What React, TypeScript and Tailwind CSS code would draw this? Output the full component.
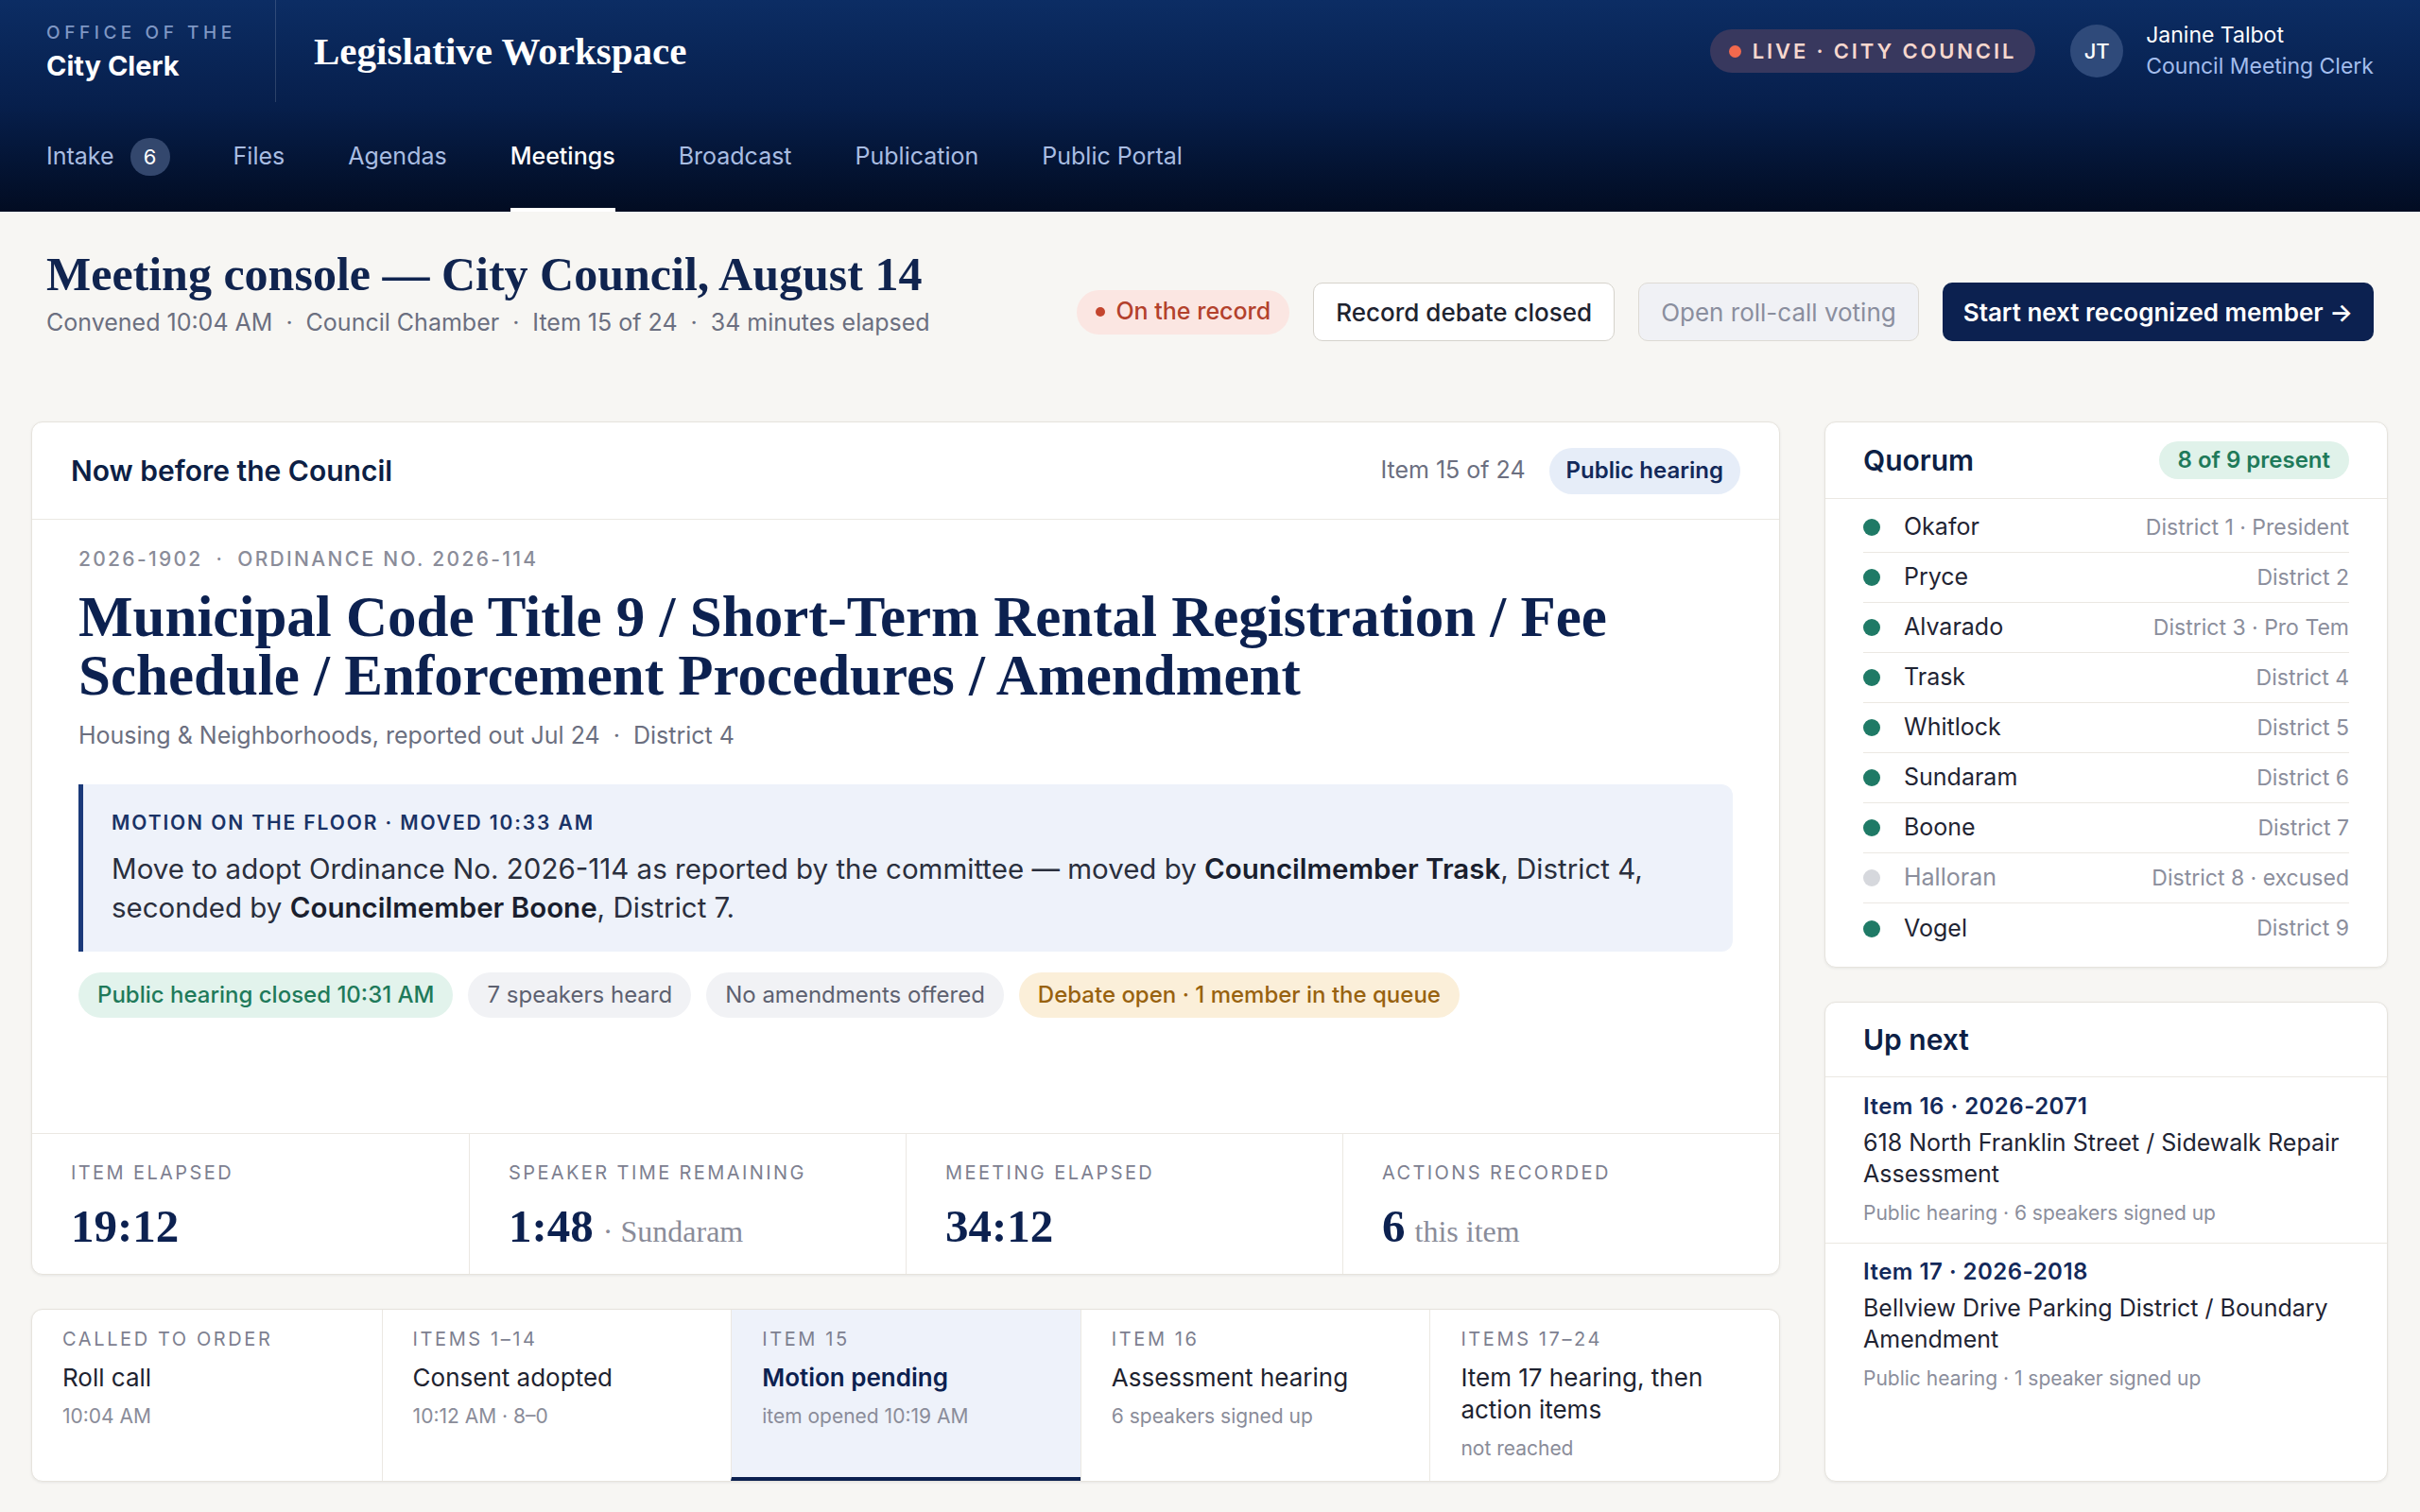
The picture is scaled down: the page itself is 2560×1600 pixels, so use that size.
import React from "react";

const navItems = [
  { label: "Intake", badge: "6" },
  { label: "Files" },
  { label: "Agendas" },
  { label: "Meetings", active: true },
  { label: "Broadcast" },
  { label: "Publication" },
  { label: "Public Portal" },
];

const members = [
  { name: "Okafor", district: "District 1 · President", present: true },
  { name: "Pryce", district: "District 2", present: true },
  { name: "Alvarado", district: "District 3 · Pro Tem", present: true },
  { name: "Trask", district: "District 4", present: true },
  { name: "Whitlock", district: "District 5", present: true },
  { name: "Sundaram", district: "District 6", present: true },
  { name: "Boone", district: "District 7", present: true },
  { name: "Halloran", district: "District 8 · excused", present: false },
  { name: "Vogel", district: "District 9", present: true },
];

const stats = [
  { label: "Item elapsed", value: "19:12" },
  { label: "Speaker time remaining", value: "1:48", note: "· Sundaram" },
  { label: "Meeting elapsed", value: "34:12" },
  { label: "Actions recorded", value: "6", note: "this item" },
];

const timeline = [
  { label: "Called to order", title: "Roll call", sub: "10:04 AM" },
  { label: "Items 1–14", title: "Consent adopted", sub: "10:12 AM · 8–0" },
  { label: "Item 15", title: "Motion pending", sub: "item opened 10:19 AM", active: true },
  { label: "Item 16", title: "Assessment hearing", sub: "6 speakers signed up" },
  { label: "Items 17–24", title: "Item 17 hearing, then action items", sub: "not reached" },
];

const upNext = [
  {
    label: "Item 16 · 2026-2071",
    title: "618 North Franklin Street / Sidewalk Repair Assessment",
    sub: "Public hearing · 6 speakers signed up",
  },
  {
    label: "Item 17 · 2026-2018",
    title: "Bellview Drive Parking District / Boundary Amendment",
    sub: "Public hearing · 1 speaker signed up",
  },
];

const serif = "font-['Liberation_Serif','DejaVu_Serif',serif]";

export default function App() {
  return (
    <div className="min-h-screen bg-[#f7f6f3] font-['Inter','Noto_Sans',sans-serif] text-[#1f2433]">
      {/* Top bar */}
      <header className="bg-linear-to-b from-[#0c2d64] via-[#071f4c] to-[#020c22] px-[49px]">
        <div className="flex h-[108px] items-center">
          <div className="w-[242px]">
            <div className="text-[19px] font-medium uppercase leading-none tracking-[0.24em] text-[#7f97c4]">
              Office of the
            </div>
            <div className="mt-[11px] text-[29px] font-bold leading-none text-white">City Clerk</div>
          </div>
          <div className="h-full w-px bg-white/15" />
          <div className={`${serif} ml-[40px] text-[41px] font-bold leading-none text-white`}>
            Legislative Workspace
          </div>
          <div className="ml-auto flex items-center">
            <div className="flex h-[46px] items-center gap-[12px] rounded-full bg-[#38385e] px-[20px]">
              <span className="h-[13px] w-[13px] rounded-full bg-[#f2694d]" />
              <span className="text-[22px] font-semibold uppercase tracking-[0.13em] text-[#f6d7ce]">
                Live · City Council
              </span>
            </div>
            <div className="ml-[37px] flex h-[56px] w-[56px] items-center justify-center rounded-full bg-[#2f4a7a] text-[22px] font-medium text-white">
              JT
            </div>
            <div className="ml-[24px] leading-tight">
              <div className="text-[23px] text-white">Janine Talbot</div>
              <div className="mt-[4px] text-[23px] text-[#a3bdec]">Council Meeting Clerk</div>
            </div>
          </div>
        </div>
        <nav className="flex h-[116px] items-stretch gap-[67px]">
          {navItems.map((n) => (
            <div
              key={n.label}
              className={
                n.active
                  ? "flex items-center border-b-4 border-white pt-[4px] text-[25px] font-medium text-white"
                  : "flex items-center border-b-4 border-transparent pt-[4px] text-[25px] text-[#a9bde2]"
              }
            >
              {n.label}
              {n.badge && (
                <span className="ml-[17px] flex h-[40px] w-[42px] items-center justify-center rounded-full bg-[#33476d] text-[22px] text-white">
                  {n.badge}
                </span>
              )}
            </div>
          ))}
        </nav>
      </header>

      <main className="px-[33px]">
        {/* Page title + actions */}
        <div className="flex items-start justify-between px-[16px] pt-[40px]">
          <div>
            <h1 className={`${serif} text-[50px] font-bold leading-[53px] text-[#10244f]`}>
              Meeting console — City Council, August 14
            </h1>
            <div className="mt-[8px] flex items-center text-[25px] leading-[32px] text-[#6b6f80]">
              <span>Convened 10:04 AM</span>
              <span className="mx-[14px]">·</span>
              <span>Council Chamber</span>
              <span className="mx-[14px]">·</span>
              <span>Item 15 of 24</span>
              <span className="mx-[14px]">·</span>
              <span>34 minutes elapsed</span>
            </div>
          </div>
          <div className="mt-[35px] flex items-center gap-[25px]">
            <div className="flex h-[47px] items-center rounded-full bg-[#fbe6e2] px-[20px] text-[25px] font-medium text-[#b3412c]">
              <span className="mr-[11px] h-[10px] w-[10px] rounded-full bg-[#c4452e]" />
              On the record
            </div>
            <button className="h-[62px] rounded-[10px] border border-[#d5d2cb] bg-white px-[23px] text-[26px] font-medium text-[#1e2330]">
              Record debate closed
            </button>
            <button className="h-[62px] rounded-[10px] border border-[#dddad4] bg-[#f0f1f5] px-[23px] text-[26px] text-[#8a8e9e]">
              Open roll-call voting
            </button>
            <button className="h-[62px] rounded-[10px] bg-[#0c2150] px-[22px] text-[26px] font-semibold text-white">
              Start next recognized member →
            </button>
          </div>
        </div>

        <div className="mt-[85px] grid grid-cols-[1850px_596px] gap-x-[47px]">
          {/* Left column */}
          <div className="flex flex-col gap-[36px]">
            <section className="flex h-[903px] flex-col overflow-hidden rounded-[12px] border border-[#e6e3dd] bg-white shadow-[0_1px_3px_rgba(20,24,40,0.07)]">
              <div className="flex h-[103px] shrink-0 items-center justify-between border-b border-[#ebe8e2] px-[41px]">
                <h2 className="text-[30px] font-semibold text-[#0d1f45]">Now before the Council</h2>
                <div className="flex items-center">
                  <span className="text-[25px] text-[#6b6f80]">Item 15 of 24</span>
                  <span className="ml-[25px] flex h-[49px] items-center rounded-full bg-[#e6edf8] px-[18px] text-[24px] font-semibold text-[#13295a]">
                    Public hearing
                  </span>
                </div>
              </div>

              <div className="flex-1 px-[49px] pt-[30px]">
                <div className="flex items-center text-[21px] font-medium uppercase leading-[24px] tracking-[0.11em] text-[#8a8c99]">
                  <span>2026-1902</span>
                  <span className="mx-[14px]">·</span>
                  <span>Ordinance No. 2026-114</span>
                </div>
                <h3 className={`${serif} mt-[18px] text-[61px] font-bold leading-[62px] text-[#0c2150]`}>
                  Municipal Code Title 9 / Short-Term Rental Registration / Fee Schedule / Enforcement Procedures /
                  Amendment
                </h3>
                <div className="mt-[16px] flex items-center text-[25px] leading-[32px] text-[#6b6f80]">
                  <span>Housing &amp; Neighborhoods, reported out Jul 24</span>
                  <span className="mx-[14px]">·</span>
                  <span>District 4</span>
                </div>

                <div className="mt-[36px] rounded-r-[12px] border-l-[5px] border-[#1b3a7a] bg-[#eef2fa] pb-[26px] pl-[30px] pr-[40px] pt-[29px]">
                  <div className="text-[21px] font-semibold uppercase leading-[24px] tracking-[0.09em] text-[#1a3366]">
                    Motion on the floor · Moved 10:33 AM
                  </div>
                  <p className="mt-[16px] text-[29.5px] leading-[41px] text-[#2a2f3d]">
                    <span>Move to adopt Ordinance No. 2026-114 as reported by the committee — moved by </span>
                    <strong className="font-semibold text-[#1a1f2e]">Councilmember Trask</strong>
                    <span>, District 4,</span>
                    <br />
                    <span>seconded by </span>
                    <strong className="font-semibold text-[#1a1f2e]">Councilmember Boone</strong>
                    <span>, District 7.</span>
                  </p>
                </div>

                <div className="mt-[22px] flex gap-[16px]">
                  <span className="flex h-[48px] items-center rounded-full bg-[#e2f3ec] px-[20px] text-[24px] font-medium text-[#1f7a5a]">
                    Public hearing closed 10:31 AM
                  </span>
                  <span className="flex h-[48px] items-center rounded-full bg-[#f1f2f5] px-[20px] text-[24px] text-[#5d6170]">
                    7 speakers heard
                  </span>
                  <span className="flex h-[48px] items-center rounded-full bg-[#f1f2f5] px-[20px] text-[24px] text-[#5d6170]">
                    No amendments offered
                  </span>
                  <span className="flex h-[48px] items-center rounded-full bg-[#fbefd9] px-[20px] text-[24px] font-medium text-[#98620f]">
                    Debate open · 1 member in the queue
                  </span>
                </div>
              </div>

              <div className="grid h-[149px] shrink-0 grid-cols-4 border-t border-[#ebe8e2]">
                {stats.map((s, i) => (
                  <div key={s.label} className={i === 0 ? "px-[41px] pt-[29px]" : "border-l border-[#ebe8e2] px-[41px] pt-[29px]"}>
                    <div className="text-[20px] uppercase leading-[24px] tracking-[0.12em] text-[#7d8090]">{s.label}</div>
                    <div className={`${serif} mt-[17px] flex items-baseline leading-[56px]`}>
                      <span className="text-[49px] font-bold text-[#0c2150]">{s.value}</span>
                      {s.note && <span className="ml-[10px] text-[32px] text-[#8a8c99]">{s.note}</span>}
                    </div>
                  </div>
                ))}
              </div>
            </section>

            {/* Agenda progress */}
            <section className="grid h-[183px] grid-cols-5 overflow-hidden rounded-[12px] border border-[#e6e3dd] bg-white shadow-[0_1px_3px_rgba(20,24,40,0.07)]">
              {timeline.map((t, i) => (
                <div
                  key={t.label}
                  className={
                    t.active
                      ? "border-b-4 border-l border-b-[#0c2150] border-l-[#ebe8e2] bg-[#eef2fa] px-[32px] pt-[19px]"
                      : i === 0
                        ? "px-[32px] pt-[19px]"
                        : "border-l border-[#ebe8e2] px-[32px] pt-[19px]"
                  }
                >
                  <div className="text-[20px] uppercase leading-[24px] tracking-[0.13em] text-[#7d8090]">{t.label}</div>
                  <div
                    className={
                      t.active
                        ? "mt-[12px] text-[26px] font-semibold leading-[34px] text-[#0c2150]"
                        : "mt-[12px] text-[26px] leading-[34px] text-[#1e2330]"
                    }
                  >
                    {t.title}
                  </div>
                  <div className="mt-[10px] text-[21px] leading-[28px] text-[#8a8c99]">{t.sub}</div>
                </div>
              ))}
            </section>
          </div>

          {/* Right column */}
          <div className="flex flex-col gap-[36px]">
            <section className="rounded-[12px] border border-[#e6e3dd] bg-white shadow-[0_1px_3px_rgba(20,24,40,0.07)]">
              <div className="flex h-[81px] items-center justify-between border-b border-[#ebe8e2] px-[40px]">
                <h2 className="text-[30px] font-semibold text-[#0d1f45]">Quorum</h2>
                <span className="flex h-[40px] items-center rounded-full bg-[#e0f2ea] px-[20px] text-[24px] font-semibold text-[#1f7a5a]">
                  8 of 9 present
                </span>
              </div>
              <ul className="px-[40px] pb-[14px] pt-[4px]">
                {members.map((m, i) => (
                  <li
                    key={m.name}
                    className={
                      i === members.length - 1
                        ? "flex h-[53px] items-center"
                        : "flex h-[53px] items-center border-b border-[#ebe8e2]"
                    }
                  >
                    <span className={m.present ? "h-[18px] w-[18px] rounded-full bg-[#1f7a66]" : "h-[18px] w-[18px] rounded-full bg-[#d6d8dd]"} />
                    <span className={m.present ? "ml-[25px] text-[25px] text-[#1f2433]" : "ml-[25px] text-[25px] text-[#8b8e9c]"}>
                      {m.name}
                    </span>
                    <span className="ml-auto text-[23px] text-[#8b8e9c]">{m.district}</span>
                  </li>
                ))}
              </ul>
            </section>

            <section className="flex-1 rounded-[12px] border border-[#e6e3dd] bg-white shadow-[0_1px_3px_rgba(20,24,40,0.07)]">
              <div className="flex h-[79px] items-center border-b border-[#ebe8e2] px-[40px]">
                <h2 className="text-[30px] font-semibold text-[#0d1f45]">Up next</h2>
              </div>
              {upNext.map((u, i) => (
                <div
                  key={u.label}
                  className={i === 0 ? "border-b border-[#ebe8e2] px-[40px] pb-[17px] pt-[17px]" : "px-[40px] pb-[17px] pt-[16px]"}
                >
                  <div className="text-[24px] font-semibold leading-[28px] tracking-[0.02em] text-[#13295a]">{u.label}</div>
                  <div className="mt-[8px] text-[25px] leading-[33px] text-[#1f2433]">{u.title}</div>
                  <div className="mt-[11px] text-[21px] leading-[28px] text-[#8b8e9c]">{u.sub}</div>
                </div>
              ))}
            </section>
          </div>
        </div>
      </main>
    </div>
  );
}
